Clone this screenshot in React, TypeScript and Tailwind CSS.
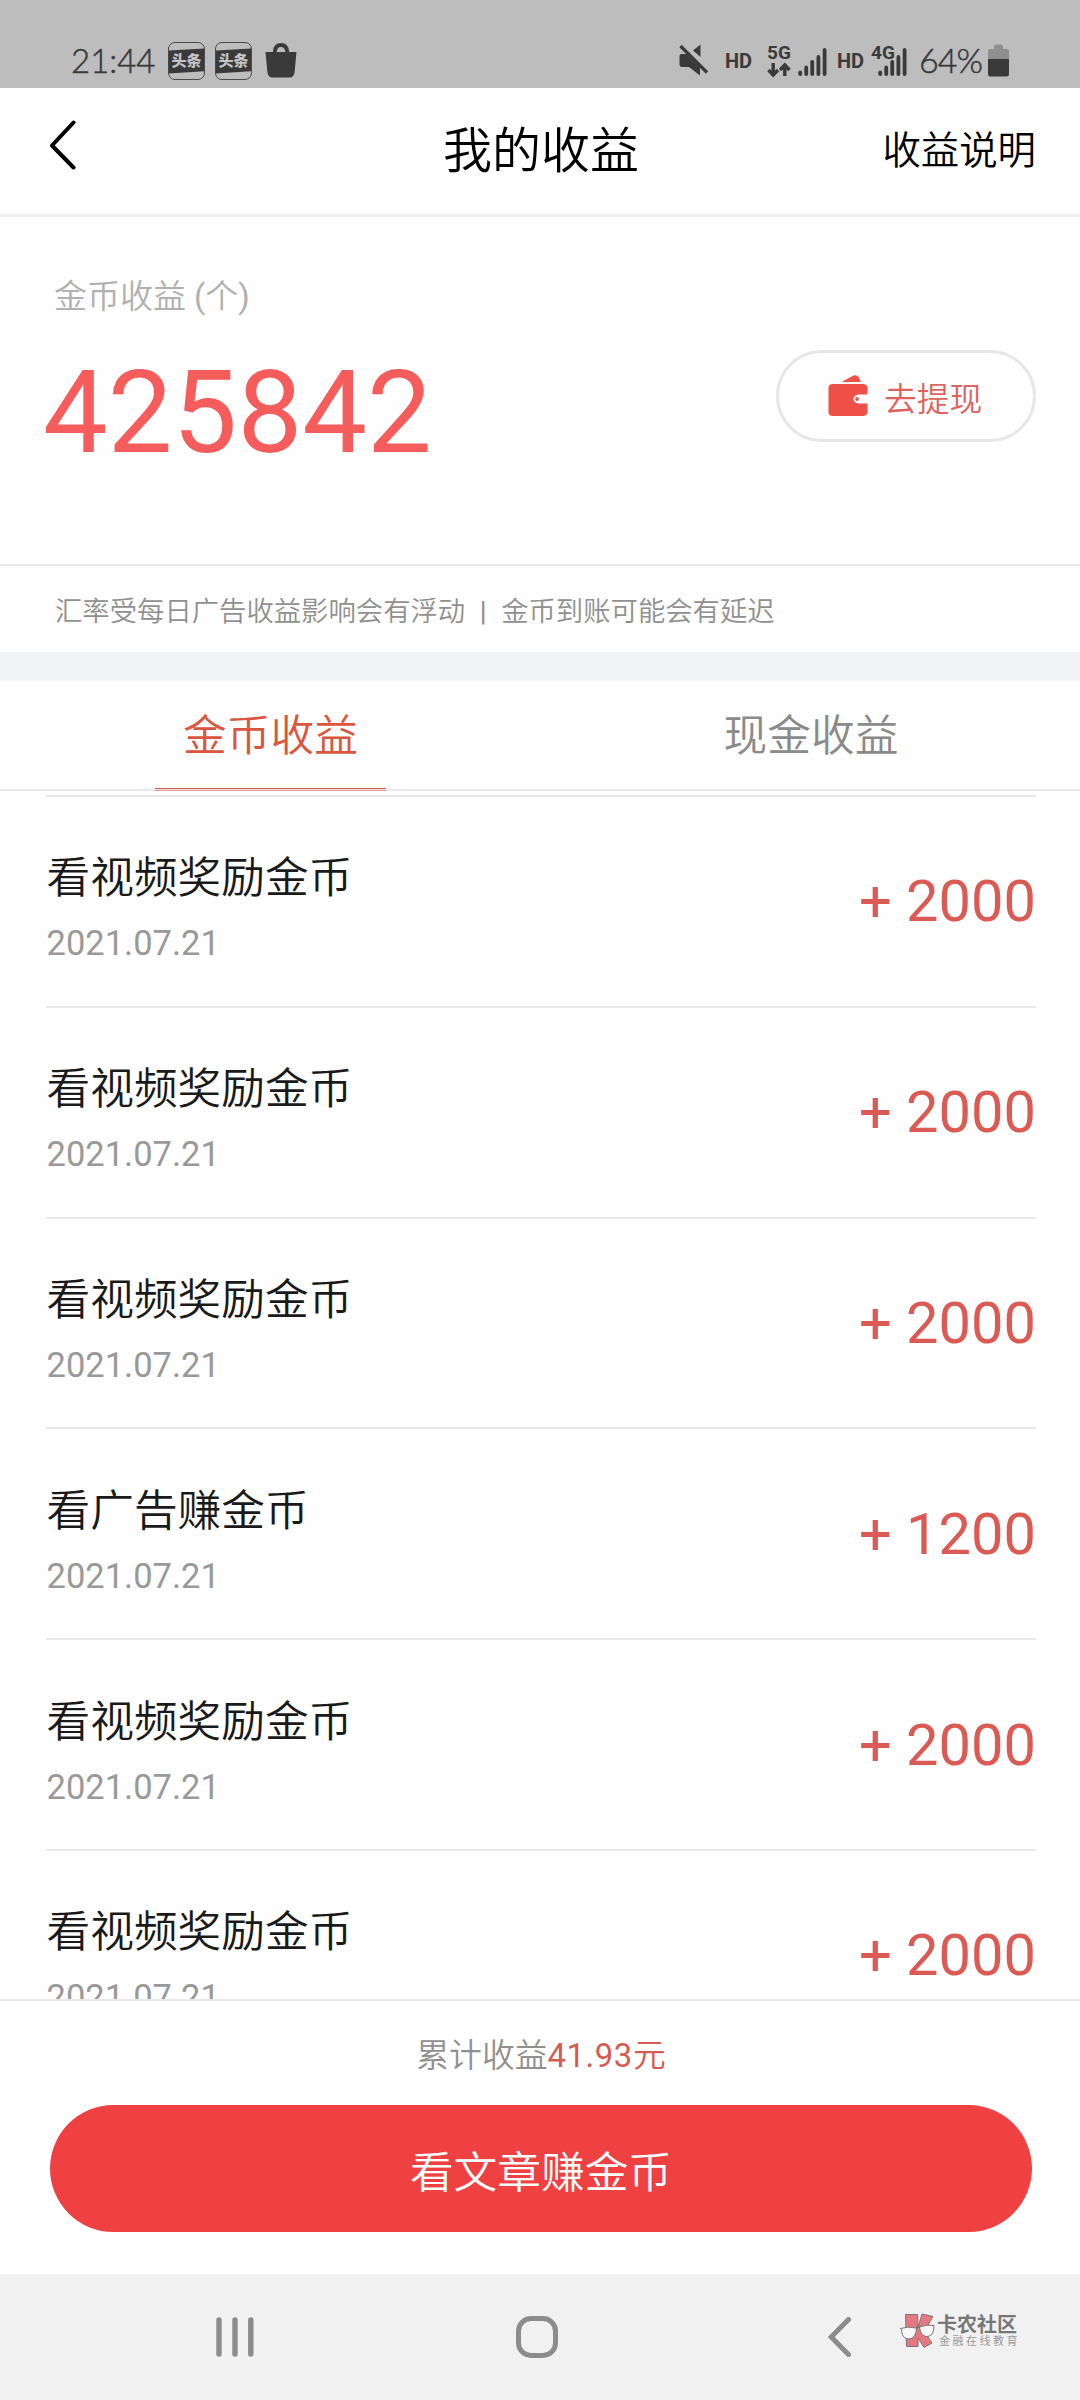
const FONT = "font-['Roboto','Noto_Sans_CJK_SC',sans-serif]";

type Entry = { title: string; date: string; amount: string };

const entries: Entry[] = [
  { title: '看视频奖励金币', date: '2021.07.21', amount: '+ 2000' },
  { title: '看视频奖励金币', date: '2021.07.21', amount: '+ 2000' },
  { title: '看视频奖励金币', date: '2021.07.21', amount: '+ 2000' },
  { title: '看广告赚金币', date: '2021.07.21', amount: '+ 1200' },
  { title: '看视频奖励金币', date: '2021.07.21', amount: '+ 2000' },
  { title: '看视频奖励金币', date: '2021.07.21', amount: '+ 2000' },
];

function NewsBadge() {
  return (
    <span className="relative flex h-[38px] w-[37px] items-center justify-center overflow-hidden rounded-[7px] border border-[#4a4a4a]">
      <svg className="absolute inset-0" width="37" height="38" viewBox="0 0 37 38">
        <path d="M0 7.5 37 5.5V28L0 30.5Z" fill="#3a3a3a" />
      </svg>
      <span className="relative -mt-[3px] font-['Noto_Sans_CJK_SC',sans-serif] text-[15px] leading-[15px] font-black whitespace-nowrap text-[#c4c4c4]">
        头条
      </span>
    </span>
  );
}

function BagIcon() {
  return (
    <svg width="32" height="35" viewBox="0 0 32 35" fill="#3a3a3a">
      <path d="M0.5 9H31.5L29.6 29Q29 34.5 24.5 34.5H7.5Q3 34.5 2.4 29Z" />
      <path d="M9.8 10V8.5Q10.5 2 16 2T22.2 8.5V10" fill="none" stroke="#3a3a3a" strokeWidth="3.8" />
    </svg>
  );
}

function MuteIcon() {
  return (
    <svg width="30" height="32" viewBox="0 0 30 32" fill="#3a3a3a">
      <path d="M2.500 10H7.500L21 23.500V31.500L10 23H3Q0.5 23 0.5 20V12Q.5 10 2.500 10Z" />
      <path d="M21.5 0.5V13L14 6.5Z" />
      <path d="M1.5 2 28 28.5" stroke="#3a3a3a" strokeWidth="3.2" />
    </svg>
  );
}

function SignalBars() {
  return (
    <svg width="29" height="30" viewBox="0 0 29 30" stroke="#3a3a3a" strokeWidth="3.8" strokeLinecap="round">
      <path d="M2.2 25.5V27M8.2 20.5V27M14.2 15V27M20.4 10V27M26.6 3V27" />
    </svg>
  );
}

function StatusBar() {
  return (
    <div className="flex h-[88px] shrink-0 bg-[#bdbdbd] pl-[71px] text-[#3a3a3a]">
      <span className="mt-[40px] h-10 w-[97px] font-['Lato',sans-serif] text-[33px] leading-10 font-light whitespace-nowrap [-webkit-text-stroke:0.5px_#3a3a3a]">21:44</span>
      <div className="mt-[42px] flex gap-[10px]">
        <NewsBadge />
        <NewsBadge />
      </div>
      <div className="mt-[43px] ml-[13px]">
        <BagIcon />
      </div>
      <div className="mt-[44px] ml-[382px] w-[46px]">
        <MuteIcon />
      </div>
      <span className="mt-[51px] w-[42px] font-['Roboto'] text-[20px] leading-5 font-bold">HD</span>
      <div className="mt-[43px] flex w-[31px] flex-col">
        <span className="font-['Roboto'] text-[19px] leading-5 font-bold">5G</span>
        <svg className="-mt-px" width="24" height="16" viewBox="0 0 24 16" fill="none" stroke="#3a3a3a" strokeWidth="3.4">
          <path d="M6.2 1V13M1.5 8 6.2 13 11 8M17.8 14V3M13 8 17.8 3 22.5 8" />
        </svg>
      </div>
      <div className="mt-[47px] w-[39px]">
        <SignalBars />
      </div>
      <span className="mt-[51px] w-[33px] font-['Roboto'] text-[20px] leading-5 font-bold">HD</span>
      <div className="relative mt-[47px] w-[49px] pl-2">
        <SignalBars />
        <span className="absolute top-[-4px] left-px font-['Roboto'] text-[19px] leading-5 font-bold">4G</span>
      </div>
      <span className="mt-[40px] w-[69px] font-['Lato',sans-serif] text-[34px] leading-10 font-light tracking-[-1px] whitespace-nowrap [-webkit-text-stroke:0.5px_#3a3a3a]">64%</span>
      <svg className="mt-[44px]" width="21" height="33" viewBox="0 0 21 33">
        <path d="M6 5V2Q6 0.5 8 0.5H13Q15 0.5 15 2V5H19Q21 5 21 7V15H0V7Q0 5 2 5Z" fill="#8f8f8f" />
        <path d="M0 15H21V30Q21 32.5 18.5 32.5H2.5Q0 32.5 0 30Z" fill="#3a3a3a" />
      </svg>
    </div>
  );
}

function Header() {
  return (
    <header className="grid h-[129px] shrink-0 grid-cols-3 items-center border-b-[3px] border-[#f0f0f0] px-[44px] text-black">
      <svg className="-mt-3 ml-[4px]" width="28" height="52" viewBox="0 0 28 52" fill="none" stroke="#000" strokeWidth="4" strokeLinecap="round" strokeLinejoin="round">
        <path d="M25.500 3.5 4 26.500 25.500 48.5" />
      </svg>
      <h1 className="pt-px pl-[2px] text-center text-[49px] leading-[60px] font-[350]">我的收益</h1>
      <span className="text-right text-[38.4px] leading-[50px] font-[350]">收益说明</span>
    </header>
  );
}

function WalletIcon() {
  return (
    <svg width="40" height="42" viewBox="0 0 40 42" fill="#ef5048">
      <path d="M13.5 7 25 0.8Q28.5-.8 30.500 1.800L33 7Z" />
      <path d="M5 9H35Q39 9 39.500 13V19.500H31Q25.500 20 25.500 24T31 28.500H39.500V37Q39 41 35 41H5Q.5 41 .5 37V13Q.5 9 5 9Z" />
      <circle cx="29" cy="24" r="1.9" />
    </svg>
  );
}

function Summary() {
  return (
    <section className="flex h-[347px] shrink-0 justify-between pr-11 pl-[54px]">
      <div>
        <div className="mt-[60px] text-[33px] leading-10 font-[350] text-[#b0b0b0]">
          金币收益 <span className="font-normal">(</span>个<span className="font-normal">)</span>
        </div>
        <div className="mt-[26px] -ml-[11px] text-[115.300px] leading-[140px] text-[#f55c5c]">425842</div>
      </div>
      <button className="mt-[133px] flex h-[92px] w-[260px] items-center rounded-full border-[3px] border-[#e7e7e7] pl-[49px] text-[32.800px] leading-10 font-[350] text-[#dc635e]">
        <WalletIcon />
        <span className="mt-[7px] ml-[16px]">去提现</span>
      </button>
    </section>
  );
}

function Tabs() {
  return (
    <nav className="flex h-[110px] shrink-0 border-b-2 border-[#e9e9e9] text-[43.700px] leading-[50px] font-[350]">
      <div className="relative flex w-1/2 items-center justify-center pt-[2px] pl-px text-[#db563f]">
        金币收益
        <span className="absolute -bottom-[2px] left-[155px] h-[3px] w-[231px] border-y border-t-[#c2665c] border-b-[#dd9d90] bg-[#fbdcd5]" />
      </div>
      <div className="flex w-1/2 items-center justify-center pt-[2px] pl-[2px] text-[#8a8a8a]">现金收益</div>
    </nav>
  );
}

function Row({ title, date, amount }: Entry) {
  return (
    <li className="mr-[44px] ml-[46px] flex h-[210.800px] shrink-0 items-center justify-between border-t-2 border-[#e9e9e9]">
      <div className="mt-[15px] pl-[0.5px]">
        <div className="text-[43.700px] leading-[52px] font-[350] text-[#1a1a1a]">{title}</div>
        <div className="mt-[17px] text-[34.500px] leading-[44px] text-[#999]">{date}</div>
      </div>
      <div className="text-[57.800px] leading-[64px] text-[#dc5a54]">{amount}</div>
    </li>
  );
}

function Footer() {
  return (
    <footer className="flex h-[275px] shrink-0 flex-col items-center border-t-2 border-[#e9e9e9] bg-white pl-[2px]">
      <div className="mt-[35px] text-[32.800px] leading-10 font-[350] text-[#909090]">
        累计收益<span className="font-normal tracking-[.6px] text-[#d45c52]">41.93</span><span className="text-[#d45c52]">元</span>
      </div>
      <button className="mt-[29px] flex h-[127px] w-[982px] items-center justify-center rounded-full bg-[#f04142] pt-[9px] text-[43.700px] leading-[60px] font-[350] text-white">
        看文章赚金币
      </button>
    </footer>
  );
}

function Watermark() {
  return (
    <div className="flex items-start">
      <svg width="35" height="36" viewBox="0 0 35 36" stroke="#777" strokeWidth="1">
        <path d="M5.500 1.500H17.500L18 14 22 1 33 3.500 27 14 26 21 32 30 24 34.500 18 25V33.500H6.500Z" fill="#e87880" />
        <path d="M.5 15.500Q8 13 16.500 15 16 25.500 9 26 2 26 1.500 17ZM19.500 14Q27 11 34 12.500 34 23.500 27 23.500 20.500 23.500 19.500 14Z" fill="#f7f7f7" />
        <path d="M16 15.500Q18 13 20 14.500" fill="none" strokeWidth="1.600" />
      </svg>
      <div className="mt-[2px] ml-[2px] flex flex-col text-[#777]">
        <span className="text-[20px] leading-5 font-bold whitespace-nowrap">卡农社区</span>
        <span className="mt-px ml-[2px] text-[11px] leading-3 tracking-[2.500px] whitespace-nowrap text-[#999]">金融在线教育</span>
      </div>
    </div>
  );
}

function NavigationBar() {
  return (
    <div className="flex h-[126px] shrink-0 items-start bg-[#f1f1f1] pt-[42px] pl-[216px]">
      <svg className="mt-px mr-[262px]" width="38" height="40" viewBox="0 0 38 40" stroke="#8c8c8c" strokeWidth="5.400" strokeLinecap="round">
        <path d="M3 3V37M19 3V37M34.800 3V37" />
      </svg>
      <span className="h-[42px] w-[42px] rounded-[15px] border-[5px] border-[#8c8c8c]" />
      <svg className="mt-px ml-[270px]" width="24" height="40" viewBox="0 0 24 40" fill="none" stroke="#8c8c8c" strokeWidth="5" strokeLinecap="round">
        <path d="M20.500 2.500 3.200 20 20.500 37.500" />
      </svg>
      <div className="-mt-[3px] ml-[48px]">
        <Watermark />
      </div>
    </div>
  );
}

export default function App() {
  return (
    <main className={`${FONT} flex h-[2400px] w-[1080px] flex-col overflow-hidden bg-[#fefefe]`}>
      <StatusBar />
      <Header />
      <Summary />
      <div className="flex h-[88px] shrink-0 border-t-2 border-[#e9e9e9] pt-[26px] pl-[55px] text-[27.350px] leading-10 font-[350] whitespace-nowrap text-[#909090]">
        <span>汇率受每日广告收益影响会有浮动</span>
        <span className="w-[36px] text-center font-medium">|</span>
        <span>金币到账可能会有延迟</span>
      </div>
      <div className="h-[29px] shrink-0 bg-[#f3f4f7]" />
      <Tabs />
      <ul className="mt-1 flex min-h-0 flex-1 flex-col overflow-hidden">
        {entries.map((entry, index) => (
          <Row key={index} {...entry} />
        ))}
      </ul>
      <Footer />
      <NavigationBar />
    </main>
  );
}
